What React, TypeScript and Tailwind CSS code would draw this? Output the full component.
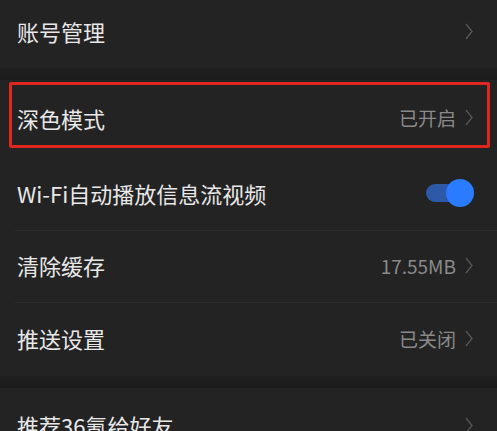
const font = { fontFamily: '"Noto Sans CJK SC", "Noto Sans", sans-serif' };

function Chevron() {
  return (
    <svg viewBox="0 0 8 17" className="h-[17px] w-[8px] shrink-0" fill="none">
      <path d="M1 1l6 7.5L1 16" stroke="#555555" strokeWidth="1.4" />
    </svg>
  );
}

function Row({
  label,
  value,
  toggle,
  height,
  divider,
  shift = "",
}: {
  label: string;
  value?: string;
  toggle?: boolean;
  height: string;
  divider?: boolean;
  shift?: string;
}) {
  return (
    <div className={`flex flex-col bg-[#232323] ${height}`}>
      <div className={`flex flex-1 items-center pl-[17px] pr-[24px] ${shift}`}>
        <span className="flex-1 text-[22px] leading-none text-[#e8e8e8]">{label}</span>
        {toggle ? (
          <div className="relative mr-[-1px] h-[28px] w-[48px]">
            <div className="absolute left-0 top-[5px] h-[18px] w-[36px] rounded-full bg-[#2c5aa8]" />
            <div className="absolute right-0 top-0 h-[28px] w-[28px] rounded-full bg-[#2a7bff]" />
          </div>
        ) : (
          <div className="flex items-center gap-[9px]">
            {value && <span className="text-[19px] leading-none text-[#8a8a8a]">{value}</span>}
            <Chevron />
          </div>
        )}
      </div>
      {divider && <div className="ml-[15px] h-px bg-[#2d2d2d]" />}
    </div>
  );
}

export default function App() {
  return (
    <div className="h-[431px] w-[497px] overflow-hidden bg-[#232323]" style={font}>
      <Row label="账号管理" height="h-[68px]" shift="pb-[6px]" />
      <div className="h-[12px] bg-gradient-to-b from-[#1f1f1f] to-[#1b1b1b]" />
      <div className="relative">
        <Row label="深色模式" value="已开启" height="h-[77px]" shift="pb-[2px]" />
        <div className="absolute left-[9px] top-[2px] h-[66px] w-[481px] rounded-[2px] border-[3px] border-[#e0261f]" />
      </div>
      <Row label="Wi-Fi自动播放信息流视频" toggle height="h-[74px]" divider shift="pb-[2px]" />
      <Row label="清除缓存" value="17.55MB" height="h-[72px]" divider shift="pb-[3px]" />
      <Row label="推送设置" value="已关闭" height="h-[73px]" shift="pb-[3px]" />
      <div className="h-[12px] bg-gradient-to-b from-[#1f1f1f] to-[#1b1b1b]" />
      <Row label="推荐36氪给好友" height="h-[72px]" shift="pt-[2px]" />
    </div>
  );
}
